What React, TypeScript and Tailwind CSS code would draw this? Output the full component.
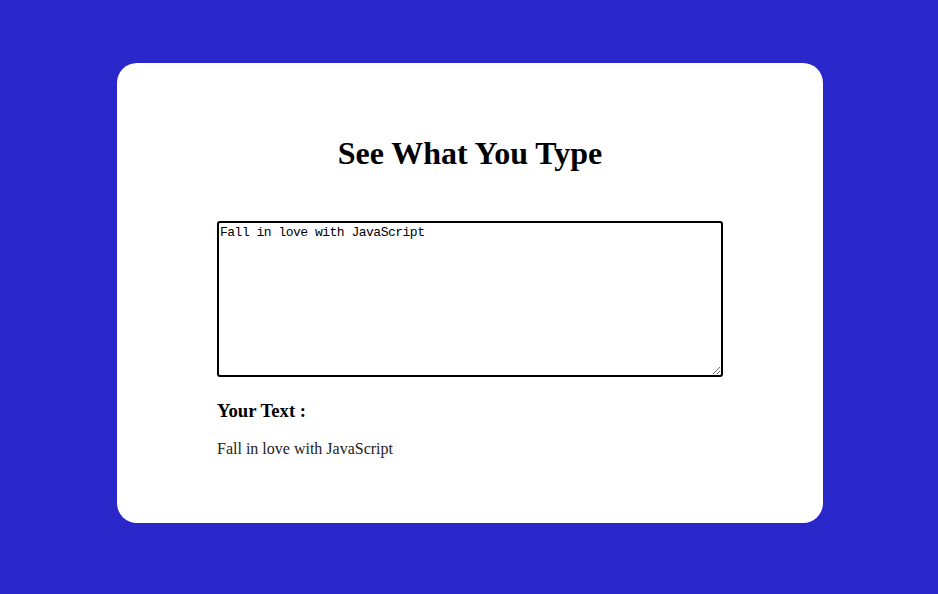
import React, { useEffect, useRef, useState } from "react";

export default function App() {
  const [text, setText] = useState("Fall in love with JavaScript");
  const ref = useRef<HTMLTextAreaElement>(null);

  useEffect(() => {
    const el = ref.current;
    if (el) {
      el.focus();
      const n = el.value.length;
      el.setSelectionRange(n, n);
    }
  }, []);

  return (
    <div
      className="w-full h-[594px] bg-[#2a27ca] flex justify-center pt-[63px] pl-[2px]"
      style={{ fontFamily: '"Liberation Serif", "Times New Roman", serif' }}
    >
      <div className="w-[706px] h-[460px] bg-white rounded-[20px] px-[100px] pt-[72px] flex flex-col">
        <h1 className="text-[32px] leading-[37px] font-bold text-black text-center">
          See What You Type
        </h1>
        <textarea
          ref={ref}
          value={text}
          onChange={(e) => setText(e.target.value)}
          className="mt-[49px] w-[506px] h-[156px] border-2 border-black rounded-[3px] pt-[2px] pb-[1px] pl-[1px] pr-[1px] text-[13px] leading-[15px] tracking-[-0.5px] text-black outline-none caret-black resize"
          style={{ fontFamily: '"Liberation Mono", "Courier New", monospace' }}
        />
        <h3 className="mt-[23px] text-[18.72px] leading-[21.5px] font-bold text-black">
          Your Text :
        </h3>
        <p className="mt-[18px] text-[16px] leading-[18.4px] text-[#222]">{text}</p>
      </div>
    </div>
  );
}
